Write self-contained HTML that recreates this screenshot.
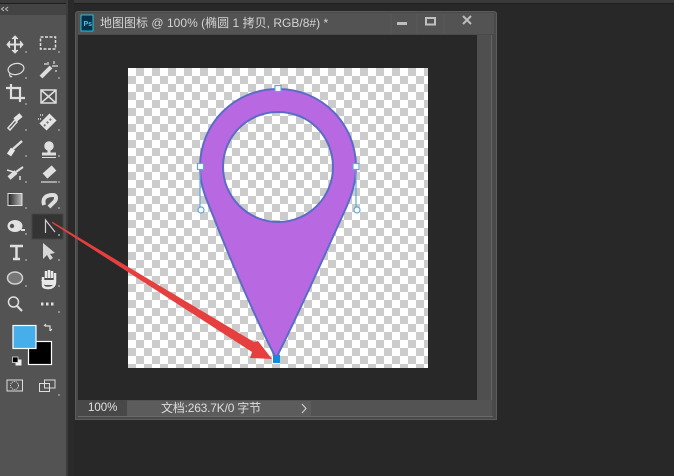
<!DOCTYPE html>
<html><head><meta charset="utf-8">
<style>
html,body{margin:0;padding:0;background:#282828;}
#r{position:relative;width:674px;height:476px;overflow:hidden;background:#282828;font-family:"Liberation Sans","Noto Sans CJK SC",sans-serif;}
.a{position:absolute;}
</style></head><body><div id="r">
<div class="a" style="left:0;top:0;width:674px;height:3px;background:#3a3a3a"></div>
<div class="a" style="left:0;top:3px;width:674px;height:1px;background:#1e1e1e"></div>
<!-- toolbar -->
<div class="a" style="left:0;top:4px;width:66px;height:472px;background:#535353"></div>
<div class="a" style="left:0;top:4px;width:66px;height:11px;background:#434343"></div>
<div class="a" style="left:66px;top:0;width:2px;height:476px;background:#3c3c3c"></div>
<div class="a" style="left:68px;top:0;width:6px;height:476px;background:#2a2a2a"></div>
<!-- doc window -->
<div class="a" style="left:75px;top:11px;width:422px;height:409px;background:#4a4a4a;border-radius:3px 3px 0 0;box-shadow:inset 0 0 0 1px #5c5c5c"></div>
<div class="a" style="left:78px;top:13px;width:416px;height:21px;background:#535353"></div>
<div class="a" style="left:78px;top:35px;width:399px;height:365px;background:#282828"></div>
<div class="a" style="left:477px;top:35px;width:15px;height:365px;background:#4f4f4f"></div>
<div class="a" style="left:491px;top:35px;width:1px;height:381px;background:#666"></div>
<div class="a" style="left:78px;top:400px;width:414px;height:16px;background:#535353"></div>
<div class="a" style="left:78px;top:400px;width:49px;height:16px;background:#484848"></div>
<div class="a" style="left:127px;top:401px;width:184px;height:15px;background:#5c5c5c"></div>
<div class="a" style="left:78px;top:416px;width:415px;height:1px;background:#6a6a6a"></div>
<div class="a" style="left:100px;top:15px;font-size:12px;line-height:16px;color:#d4d4d4;white-space:nowrap;letter-spacing:.02px">地图图标 @ 100% (椭圆 1 拷贝, RGB/8#) *</div>
<div class="a" style="left:88px;top:401px;font-size:11.500px;line-height:14px;color:#e2e2e2;white-space:nowrap">100%</div>
<div class="a" style="left:161px;top:401px;font-size:12px;line-height:14px;color:#dcdcdc;white-space:nowrap;letter-spacing:-.2px">文档:263.7K/0 字节</div>
<svg class="a" style="left:0;top:0" width="674" height="476" viewBox="0 0 674 476" xmlns="http://www.w3.org/2000/svg">
<defs>
<pattern id="c" x="128" y="68" width="16" height="16" patternUnits="userSpaceOnUse">
<rect width="16" height="16" fill="#fff"/><rect x="8" width="8" height="8" fill="#ccc"/><rect y="8" width="8" height="8" fill="#ccc"/>
</pattern>
<linearGradient id="g"><stop offset="0" stop-color="#222"/><stop offset="1" stop-color="#bbb"/></linearGradient>
<filter id="b" x="-5%" y="-5%" width="110%" height="110%"><feGaussianBlur stdDeviation="0.35"/></filter>
</defs>
<rect x="128" y="68" width="300" height="300" fill="url(#c)"/>
<!-- pin -->
<path fill-rule="evenodd" d="M278 89C234 89 200 124 200 167C200 182 204 194 210 208C228 254 256 320 276 358C296 320 325 254 346 208C352 194 356 182 356 167C356 124 322 89 278 89ZM278 112C309 112 333 136 333 167C333 197 309 222 278 222C248 222 223 197 223 167C223 136 248 112 278 112Z" fill="#b869e1" stroke="#5a6cc6" stroke-width="2"/>
<g stroke="#5fa8d8" stroke-width="1.200" fill="#fff">
<path d="M200 167V208M356 167V208" fill="none"/>
<circle cx="201" cy="210" r="3"/><circle cx="357" cy="210" r="3"/>
<rect x="197.500" y="163.500" width="6" height="6"/><rect x="353" y="163.500" width="6" height="6"/><rect x="275" y="85.500" width="6" height="6"/>
</g>
<!-- active tool -->
<rect x="32" y="214" width="31" height="25" fill="#343434" stroke="#444"/>
<!-- title bar -->
<rect x="81" y="15" width="12" height="16" fill="#04324a" stroke="#2cb8d8" stroke-width="1"/>
<text x="83.500" y="26" font-size="7" font-weight="bold" fill="#4cc4e8" font-family="Liberation Sans">Ps</text>
<path d="M391 14V34M417 14V34M444 14V34" stroke="#585858"/>
<rect x="397" y="22" width="10" height="3" fill="#bdbdbd"/>
<rect x="426" y="18" width="9" height="6.500" fill="none" stroke="#c0c0c0" stroke-width="2"/>
<path d="M463 16L471 24M471 16L463 24" stroke="#bdbdbd" stroke-width="2" fill="none"/>
<path d="M302 404L306 408.500L302 413" stroke="#c8c8c8" stroke-width="1.200" fill="none"/>
<path d="M4 7L1.500 9L4 11M8 7L5.500 9L8 11" stroke="#bbb" fill="none"/>
<!-- tools -->
<g filter="url(#b)">
<g stroke="#dedede" fill="none" stroke-width="1.500">
<!-- move -->
<path d="M15 37V52M8 44.500H22" stroke-width="2"/><path d="M12 39L15 36L18 39M12 50L15 53L18 50M10 41L7 44.500L10 48M20 41L23 44.500L20 48" fill="#dedede" stroke-width="1"/>
<!-- marquee -->
<rect x="40.500" y="37" width="15" height="12" stroke-dasharray="3 1.500"/>
<!-- lasso -->
<ellipse cx="16" cy="69" rx="8" ry="5.500" transform="rotate(-12 16 69)" stroke-width="1.200"/><path d="M10 73C9 76 11 78 12 76" stroke-width="1.200"/>
<!-- wand -->
<path d="M41 77L51 67" stroke-width="4"/><path d="M48 62V65M54 61V64M52 66H58M44 64H47M56 70V72" stroke-width="1.200"/>
<!-- crop -->
<path d="M6 88H20V102M11 84V98H25" stroke-width="2.200"/>
<!-- slice X box -->
<rect x="41" y="90" width="15" height="13"/><path d="M41 90L56 103M56 90L41 103"/>
<!-- eyedropper -->
<path d="M8 128L15 120L17 122L10 130Z" stroke-width="1.500"/><path d="M15 120L21 115" stroke-width="5" stroke="#e4e4e4"/>
<!-- bandage -->
<path d="M43 127L53 117" stroke-width="10" stroke="#e4e4e4"/><path d="M44 126L52 118" stroke-width="2" stroke="#777" stroke-dasharray="2 2"/><path d="M40 115H43M38 119H41" stroke-width="1.500" stroke-dasharray="1 1"/>
<!-- brush -->
<path d="M13 149L22 141" stroke-width="2.500"/><path d="M9 155L13 149" stroke-width="5" stroke="#e8e8e8"/>
<!-- stamp -->
<circle cx="49" cy="146" r="4" fill="#e0e0e0"/><path d="M49 149V153" stroke-width="3"/><path d="M42 154H56" stroke-width="3"/><path d="M42 157.500H56" stroke-width="1"/>
<!-- history brush -->
<path d="M9 178L16 172" stroke-width="4.500"/><path d="M16 172L23 167" stroke-width="2"/><path d="M7 170L14 172M20 176V180" stroke-width="1.500"/>
<!-- eraser -->
<path d="M45 176L54 168" stroke-width="7" stroke="#e0e0e0"/><path d="M41 182H57" stroke-width="1.200"/>
<!-- smudge -->
<path d="M44 205C42 198 46 195 53 195C56 195 57 198 55 201L49 207" stroke-width="4"/>
<!-- dodge blob -->
<ellipse cx="15" cy="226" rx="7.500" ry="6" fill="#e2e2e2" stroke="none"/><circle cx="12" cy="226" r="2.200" fill="#535353" stroke="none"/><path d="M21 230H25" stroke-width="2"/>
<!-- pen/path tool -->
<path d="M45.500 233V220L55 232" stroke="#cfcfcf" stroke-width="1.200"/>
<!-- text -->
<path d="M10 246H23M16.500 246V259M13 259H20" stroke-width="2.500"/>
<!-- arrow tool -->
<path d="M43 243V259L47 255L50 260L53 258L50 254L55 253Z" fill="#d8d8d8" stroke="none"/>
<!-- ellipse -->
<ellipse cx="15" cy="278" rx="7.500" ry="6" fill="#777" stroke="#cfcfcf"/>
<!-- hand -->
<path d="M43 277V285C43 287 45 288 48 288C52 288 55 286 55 282V273M46 278V271M49 278V270M52 278V271" stroke-width="2.500" stroke="#e8e8e8"/>
<path d="M41 280L45 285H54V280H45Z" fill="#e8e8e8" stroke="none"/>
<!-- zoom -->
<circle cx="13.500" cy="302" r="5" stroke-width="1.500"/><path d="M17 306L22 311" stroke-width="2.200"/>
<!-- dots -->
<path d="M41 304H43.500M46 304H48.500M51 304H53.500" stroke-width="3"/>
<!-- swap -->
<path d="M45 326H50V331M44 326L46 324M50 331L52 329" stroke-width="1.200"/>
<!-- quick mask -->
<rect x="7" y="380" width="15.500" height="11" stroke-width="1"/><circle cx="14.500" cy="385.500" r="4" stroke-dasharray="1 1" stroke-width="1"/>
<!-- screen mode -->
<rect x="44.500" y="380" width="10.500" height="8" stroke-width="1"/><rect x="39.500" y="383.500" width="10" height="8" stroke-width="1"/>
</g>
<rect x="8" y="193.500" width="14" height="12" fill="url(#g)" stroke="#e0e0e0"/>
<!-- corner ticks -->
<g fill="#8c8c8c">
<rect x="25" y="51" width="2" height="2"/><rect x="58" y="51" width="2" height="2"/>
<rect x="25" y="77" width="2" height="2"/><rect x="58" y="77" width="2" height="2"/>
<rect x="25" y="103" width="2" height="2"/>
<rect x="25" y="129" width="2" height="2"/><rect x="58" y="129" width="2" height="2"/>
<rect x="25" y="155" width="2" height="2"/><rect x="58" y="155" width="2" height="2"/>
<rect x="25" y="181" width="2" height="2"/><rect x="58" y="181" width="2" height="2"/>
<rect x="25" y="207" width="2" height="2"/><rect x="58" y="207" width="2" height="2"/>
<rect x="25" y="233" width="2" height="2"/><rect x="58" y="234" width="2" height="2"/>
<rect x="25" y="259" width="2" height="2"/><rect x="58" y="259" width="2" height="2"/>
<rect x="25" y="285" width="2" height="2"/><rect x="58" y="285" width="2" height="2"/>
<rect x="58" y="311" width="2" height="2"/><rect x="58" y="394" width="2" height="2"/>
</g>
</g>
<!-- colors -->
<rect x="28.500" y="341.500" width="23" height="23" fill="#000" stroke="#fff" stroke-width="1.200"/>
<rect x="13" y="325.500" width="23" height="23" fill="#46aeeb" stroke="#fff" stroke-width="1.200"/>
<rect x="15.500" y="359.500" width="6" height="6" fill="#eee"/><rect x="12.500" y="357" width="5.500" height="5.500" fill="#000" stroke="#ddd" stroke-width=".8"/>
<!-- arrow -->
<path d="M52 221.500L254 342L258 341L272 359L250 358L252 352L52 223Z" fill="#e5403f"/>
<rect x="273" y="355" width="7" height="8" fill="#0f8be0"/>
</svg>
</div></body></html>
